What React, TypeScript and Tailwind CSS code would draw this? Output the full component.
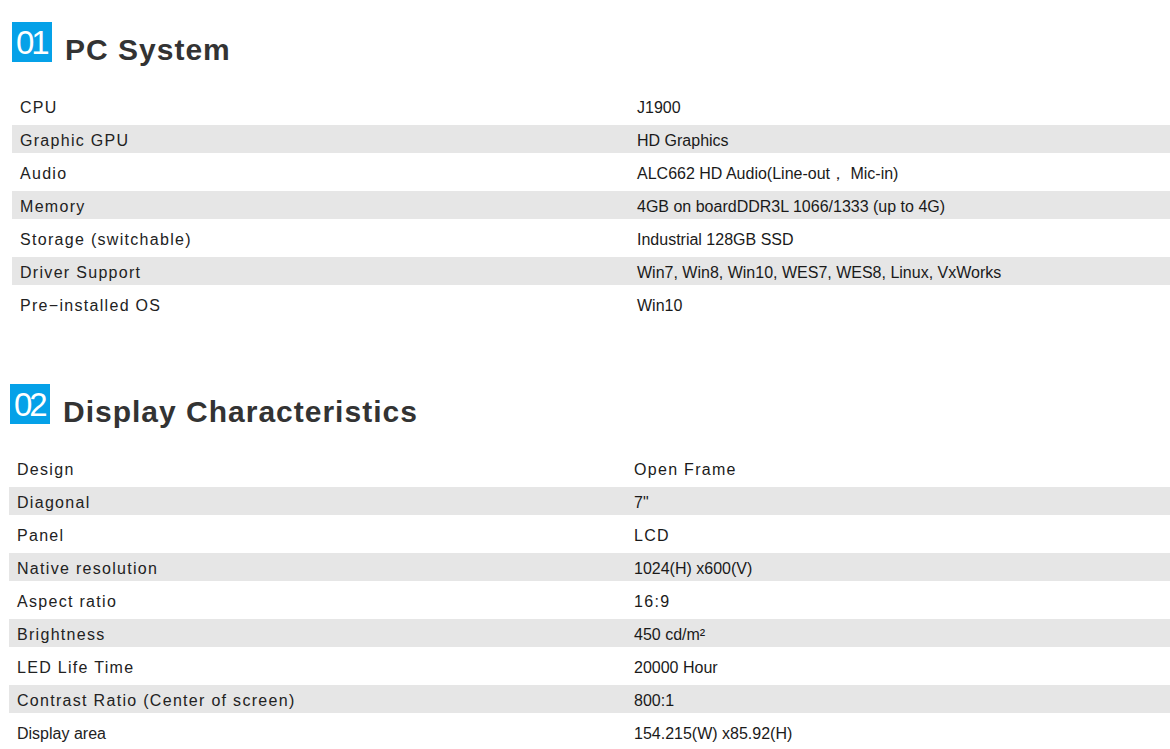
type Row = { label: string; value: string; wideValue?: boolean; small?: boolean };

const pcRows: Row[] = [
  { label: "CPU", value: "J1900" },
  { label: "Graphic GPU", value: "HD Graphics" },
  { label: "Audio", value: "ALC662 HD Audio(Line-out\uFF0C Mic-in)" },
  { label: "Memory", value: "4GB on boardDDR3L 1066/1333 (up to 4G)" },
  { label: "Storage (switchable)", value: "Industrial 128GB SSD" },
  { label: "Driver Support", value: "Win7, Win8, Win10, WES7, WES8, Linux, VxWorks" },
  { label: "Pre\u2212installed OS", value: "Win10" },
];

const displayRows: Row[] = [
  { label: "Design", value: "Open Frame", wideValue: true },
  { label: "Diagonal", value: '7"' },
  { label: "Panel", value: "LCD", wideValue: true },
  { label: "Native resolution", value: "1024(H) x600(V)" },
  { label: "Aspect ratio", value: "16:9", wideValue: true },
  { label: "Brightness", value: "450 cd/m\u00B2" },
  { label: "LED Life Time", value: "20000 Hour" },
  { label: "Contrast Ratio (Center of screen)", value: "800:1" },
  { label: "Display area", value: "154.215(W) x85.92(H)", small: true },
];

function Header({ num, title }: { num: string; title: string }) {
  return (
    <div className="flex items-end">
      <div className="w-[40px] h-[40px] bg-[#05a1e8] flex items-center pl-[4px] pt-[1px]">
        <span className="text-white text-[33px] leading-none tracking-[-3px]">{num}</span>
      </div>
      <h2 className="ml-[13px] mb-[-3px] text-[30px] leading-none font-bold tracking-[1px] text-[#333333]">
        {title}
      </h2>
    </div>
  );
}

function SpecTable({ rows, valueCol }: { rows: Row[]; valueCol: string }) {
  return (
    <div className="flex flex-col gap-[5px]">
      {rows.map((r, i) => (
        <div
          key={r.label}
          className={`flex items-center h-[28px] pt-[4px] ${i % 2 === 1 ? "bg-[#e6e6e6]" : ""}`}
        >
          <div
            className={`${valueCol} shrink-0 pl-[8px] text-[16px] ${
              r.small ? "tracking-normal" : "tracking-[1.3px]"
            } text-[#222222]`}
          >
            {r.label}
          </div>
          <div className={`text-[16px] ${r.wideValue ? "tracking-[1.3px]" : ""} text-[#1a1a1a]`}>
            {r.value}
          </div>
        </div>
      ))}
    </div>
  );
}

export default function App() {
  return (
    <div className="w-[1170px] h-[749px] bg-white overflow-hidden font-['Liberation_Sans',Arial,sans-serif]">
      <section className="pt-[22px] pl-[12px]">
        <Header num="01" title="PC System" />
        <div className="mt-[30px]">
          <SpecTable rows={pcRows} valueCol="w-[625px]" />
        </div>
      </section>

      <section className="mt-[66px] pl-[10px]">
        <Header num="02" title="Display Characteristics" />
        <div className="mt-[30px] ml-[-1px]">
          <SpecTable rows={displayRows} valueCol="w-[625px]" />
        </div>
      </section>
    </div>
  );
}
